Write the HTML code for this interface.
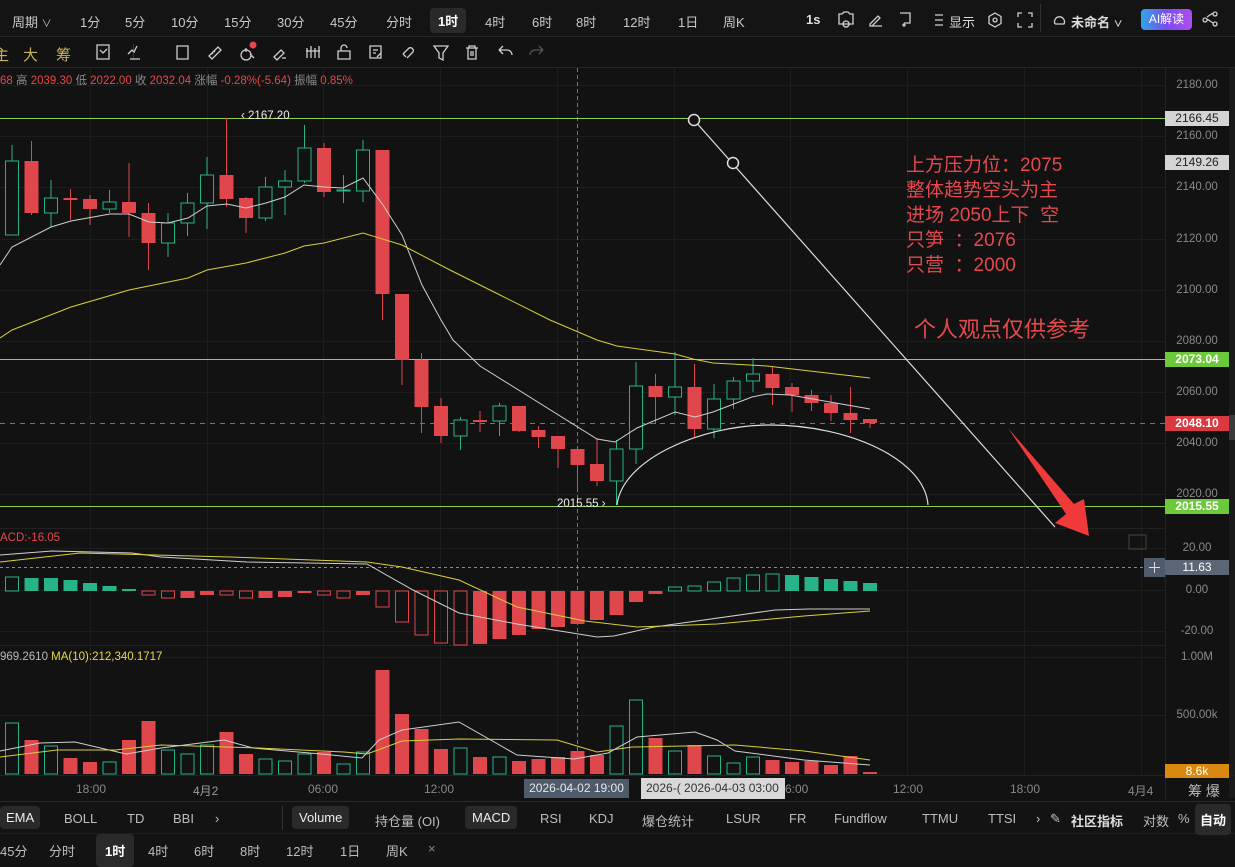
<!DOCTYPE html>
<html><head><meta charset="utf-8">
<style>
*{margin:0;padding:0;box-sizing:border-box}
body{width:1235px;height:865px;background:#121212;overflow:hidden;position:relative;font-family:"Liberation Sans","Noto Sans CJK SC",sans-serif;color:#c8c8c8}
.a{position:absolute;white-space:nowrap}
.t{font-size:13px;color:#c9c9c9;top:12px}
.hl{background:#2a2a2a;border-radius:4px}
.ax{position:absolute;left:1165px;width:64px;font-size:11.5px;color:#8a8a8a;text-align:center;line-height:13px}
.bx{position:absolute;left:1165px;width:64px;height:15px;font-size:12px;line-height:15px;text-align:center;font-weight:bold;color:#fff}
.b1{top:811px;font-size:13px;color:#bdbdbd}
.b2{top:841px;font-size:13px;color:#bdbdbd}
.r{color:#e5484d;font-size:19px}
</style></head><body>
<svg id="s" width="1235" height="865" style="position:absolute;left:0;top:0"></svg>

<!-- top bar -->
<div class="a t" style="left:12px">周期 <span style="font-size:10px">∨</span></div>
<div class="a t" style="left:80px">1分</div>
<div class="a t" style="left:125px">5分</div>
<div class="a t" style="left:171px">10分</div>
<div class="a t" style="left:224px">15分</div>
<div class="a t" style="left:277px">30分</div>
<div class="a t" style="left:330px">45分</div>
<div class="a t" style="left:386px">分时</div>
<div class="a t hl" style="left:430px;top:8px;padding:3px 8px;color:#fff;font-weight:bold">1时</div>
<div class="a t" style="left:485px">4时</div>
<div class="a t" style="left:532px">6时</div>
<div class="a t" style="left:576px">8时</div>
<div class="a t" style="left:623px">12时</div>
<div class="a t" style="left:678px">1日</div>
<div class="a t" style="left:723px">周K</div>
<div class="a t" style="left:806px;color:#ddd;font-weight:bold">1s</div>
<div class="a t" style="left:949px;color:#ddd">显示</div>
<div class="a t" style="left:1071px;color:#ddd;font-weight:bold">未命名 <span style="font-size:9px">∨</span></div>
<div class="a" style="left:1141px;top:9px;width:51px;height:21px;border-radius:4px;background:linear-gradient(90deg,#2fa6e8,#7a4cf0,#b04cf0);color:#fff;font-size:12px;line-height:21px;text-align:center">AI解读</div>

<!-- second toolbar -->
<div class="a" style="left:-6px;top:44px;font-size:15px;color:#c8b45a">主</div>
<div class="a" style="left:23px;top:44px;font-size:15px;color:#c8b45a">大</div>
<div class="a" style="left:56px;top:44px;font-size:15px;color:#c8b45a">筹</div>

<!-- info line -->
<div class="a" style="left:0;top:72px;font-size:11.5px;color:#8a8a8a"><span style="color:#e5484d">68</span> 高 <span style="color:#e5484d">2039.30</span> 低 <span style="color:#e5484d">2022.00</span> 收 <span style="color:#e5484d">2032.04</span> 涨幅 <span style="color:#e5484d">-0.28%(-5.64)</span> 振幅 <span style="color:#e5484d">0.85%</span></div>

<!-- price axis -->
<div class="ax" style="top:79px">2180.00</div>
<div class="ax" style="top:130px">2160.00</div>
<div class="ax" style="top:181px">2140.00</div>
<div class="ax" style="top:233px">2120.00</div>
<div class="ax" style="top:284px">2100.00</div>
<div class="ax" style="top:335px">2080.00</div>
<div class="ax" style="top:386px">2060.00</div>
<div class="ax" style="top:437px">2040.00</div>
<div class="ax" style="top:488px">2020.00</div>
<div class="bx" style="top:111px;background:#d4d4d4;color:#222;font-weight:normal">2166.45</div>
<div class="bx" style="top:155px;background:#d4d4d4;color:#222;font-weight:normal">2149.26</div>
<div class="bx" style="top:352px;background:#6cc93a">2073.04</div>
<div class="bx" style="top:416px;background:#d9393f">2048.10</div>
<div class="bx" style="top:499px;background:#6cc93a">2015.55</div>
<div class="ax" style="top:542px">20.00</div>
<div class="bx" style="top:560px;background:#5b6677;font-weight:normal">11.63</div>
<div class="ax" style="top:584px">0.00</div>
<div class="ax" style="top:625px">-20.00</div>
<div class="ax" style="top:651px">1.00M</div>
<div class="ax" style="top:709px">500.00k</div>
<div class="bx" style="top:764px;background:#d9890f;height:14px;line-height:14px;font-weight:normal">8.6k</div>
<div class="a" style="left:1229px;top:415px;width:6px;height:25px;background:#3a3a3a"></div>

<!-- annotations -->
<div class="a r" style="left:906px;top:150px">上方压力位：2075</div>
<div class="a r" style="left:906px;top:175px">整体趋势空头为主</div>
<div class="a r" style="left:906px;top:200px">进场 2050上下&nbsp;&nbsp;空</div>
<div class="a r" style="left:906px;top:225px">只笋&nbsp;&nbsp;：2076</div>
<div class="a r" style="left:906px;top:250px">只营&nbsp;&nbsp;：2000</div>
<div class="a r" style="left:914px;top:312px;font-size:22px">个人观点仅供参考</div>

<div class="a" style="left:241px;top:110px;font-size:11.5px;color:#eee">‹ 2167.20</div>
<div class="a" style="left:557px;top:498px;font-size:11.5px;color:#eee">2015.55 ›</div>

<div class="a" style="left:0;top:532px;font-size:11.5px;color:#e5484d">ACD:-16.05</div>
<div class="a" style="left:0;top:651px;font-size:11.5px;color:#bbb">969.2610 <span style="color:#e8d84a">MA(10):212,340.1717</span></div>

<!-- time axis -->
<div class="a" style="left:76px;top:782px;font-size:12px;color:#888">18:00</div>
<div class="a" style="left:193px;top:782px;font-size:12px;color:#999">4月2</div>
<div class="a" style="left:308px;top:782px;font-size:12px;color:#888">06:00</div>
<div class="a" style="left:424px;top:782px;font-size:12px;color:#888">12:00</div>
<div class="a" style="left:524px;top:779px;width:105px;height:19px;background:#4f5a6b;font-size:12px;color:#e6e6e6;line-height:19px;text-align:center">2026-04-02 19:00</div>
<div class="a" style="left:785px;top:782px;font-size:12px;color:#888">6:00</div>
<div class="a" style="left:641px;top:778px;width:144px;height:21px;background:#d8d8d8;font-size:12px;color:#333;line-height:21px;padding-left:5px">2026-( 2026-04-03 03:00</div>
<div class="a" style="left:893px;top:782px;font-size:12px;color:#888">12:00</div>
<div class="a" style="left:1010px;top:782px;font-size:12px;color:#888">18:00</div>
<div class="a" style="left:1128px;top:782px;font-size:12px;color:#888">4月4</div>
<div class="a" style="left:1188px;top:781px;font-size:14px;color:#bbb">筹 爆</div>

<!-- bottom bar 1 -->
<div class="a b1 hl" style="left:0;top:806px;padding:4px 6px;color:#eee">EMA</div>
<div class="a b1" style="left:64px">BOLL</div>
<div class="a b1" style="left:127px">TD</div>
<div class="a b1" style="left:173px">BBI</div>
<div class="a b1" style="left:215px">›</div>
<div class="a b1 hl" style="left:292px;top:806px;padding:4px 7px;color:#eee">Volume</div>
<div class="a b1" style="left:375px">持仓量 (OI)</div>
<div class="a b1 hl" style="left:465px;top:806px;padding:4px 7px;color:#eee">MACD</div>
<div class="a b1" style="left:540px">RSI</div>
<div class="a b1" style="left:589px">KDJ</div>
<div class="a b1" style="left:642px">爆仓统计</div>
<div class="a b1" style="left:726px">LSUR</div>
<div class="a b1" style="left:789px">FR</div>
<div class="a b1" style="left:834px">Fundflow</div>
<div class="a b1" style="left:922px">TTMU</div>
<div class="a b1" style="left:988px">TTSI</div>
<div class="a b1" style="left:1036px">›</div>
<div class="a b1" style="left:1050px">✎</div>
<div class="a b1" style="left:1071px;color:#ddd;font-weight:bold">社区指标</div>
<div class="a b1" style="left:1143px">对数</div>
<div class="a b1" style="left:1178px">%</div>
<div class="a b1 hl" style="left:1195px;top:804px;padding:6px 5px;color:#fff;font-weight:bold">自动</div>

<!-- bottom bar 2 -->
<div class="a b2" style="left:0">45分</div>
<div class="a b2" style="left:49px">分时</div>
<div class="a b2 hl" style="left:96px;top:834px;padding:7px 9px;color:#fff;font-weight:bold">1时</div>
<div class="a b2" style="left:148px">4时</div>
<div class="a b2" style="left:194px">6时</div>
<div class="a b2" style="left:240px">8时</div>
<div class="a b2" style="left:286px">12时</div>
<div class="a b2" style="left:340px">1日</div>
<div class="a b2" style="left:386px">周K</div>
<div class="a b2" style="left:428px;color:#888">×</div>

<script>
var s=document.getElementById('s'),h='';
function L(x1,y1,x2,y2,c,w,d){h+='<line x1="'+x1+'" y1="'+y1+'" x2="'+x2+'" y2="'+y2+'" stroke="'+c+'" stroke-width="'+(w||1)+'"'+(d?' stroke-dasharray="'+d+'"':'')+'/>';}
function R(x,y,w,hh,f,st){h+='<rect x="'+x+'" y="'+y+'" width="'+w+'" height="'+Math.max(hh,1)+'" fill="'+f+'"'+(st?' stroke="'+st+'"':'')+'/>';}
function P(pts,c,w){h+='<polyline fill="none" stroke="'+c+'" stroke-width="'+(w||1)+'" points="'+pts+'"/>';}
var G='#27b38a',RD='#e0474c';
// bars backgrounds
R(0,0,1235,36,'#141414');L(0,36.5,1235,36.5,'#262626');
R(0,37,1235,30,'#121212');L(0,67.5,1235,67.5,'#262626');
L(1040.5,4,1040.5,32,'#333');L(133.5,44,133.5,60,'#333');
R(0,800,1235,65,'#131313');L(0,801.5,1235,801.5,'#2a2a2a');L(0,833.5,1235,833.5,'#1f1f1f');L(282.5,806,282.5,830,'#333');
R(1229,68,6,730,'#1a1a1a');
// grid
[90,207,323,440,557,674,790,907,1024,1141].forEach(function(x){L(x+.5,68,x+.5,775,'#1d1d1d');});
[85,136,187,239,290,341,392,443,494,548,590,631,657,715].forEach(function(y){L(0,y+.5,1165,y+.5,'#1d1d1d');});
L(1165.5,68,1165.5,800,'#222');
L(0,528.5,1165,528.5,'#222');L(0,645.5,1165,645.5,'#222');L(0,775.5,1235,775.5,'#222');
// crosshair
L(577.5,68,577.5,775,'#777',1,'4,3');L(0,567.5,1150,567.5,'#888',1,'3,3');
h+='<rect x="1144" y="558" width="21" height="19" fill="#4f5a6b"/>';L(1149,567.5,1160,567.5,'#ddd');L(1154.5,562,1154.5,573,'#ddd');
h+='<rect x="1129" y="535" width="17" height="14" fill="none" stroke="#444"/>';
// horizontal lines
L(0,118.5,1165,118.5,'#8fd14f');L(0,359.5,1165,359.5,'#8fd14f');L(0,506.5,1165,506.5,'#8fd14f');
L(0,423.5,1165,423.5,'#e0474c',1,'5,5');
// candles
var C=[[1,161,235,145,235],[0,161,213,141,215],[1,198,213,180,227],[0,198,200,189,220],[0,199,209,195,225],[1,202,209,190,213],[0,202,213,163,237],[0,213,243,203,270],[1,223,243,213,257],[1,203,223,193,236],[1,175,203,157,229],[0,175,199,118,207],[0,198,218,197,233],[1,187,218,177,221],[1,181,187,170,215],[1,148,181,125,183],[0,148,192,143,197],[1,190,191,175,203],[1,150,191,140,202],[0,150,294,150,320],[0,294,360,294,385],[0,360,407,353,433],[0,406,436,398,443],[1,420,436,417,450],[0,420,422,411,432],[1,406,421,403,436],[0,406,431,406,432],[0,430,437,426,448],[0,436,449,436,468],[0,449,465,449,489],[0,464,481,438,486],[1,449,481,440,505],[1,386,449,362,464],[0,386,397,374,424],[1,387,397,352,415],[0,387,429,364,437],[1,399,429,384,438],[1,381,399,377,409],[1,374,381,358,392],[0,374,388,367,405],[0,387,395,383,412],[0,395,403,390,411],[0,403,413,395,421],[0,413,420,387,433],[0,419,423,419,428]];
C.forEach(function(c,i){var x=12+19.5*i;var col=c[0]?G:RD;L(x,c[3],x,c[1],col);L(x,c[2],x,c[4],col);
 if(c[0])h+='<rect x="'+(x-6.5)+'" y="'+c[1]+'" width="13" height="'+Math.max(c[2]-c[1],1)+'" fill="#121212" stroke="'+G+'"/>';else R(x-7,c[1],14,c[2]-c[1],RD);});
// MAs
P('0,265 12,247 51,227 71,221 110,214 129,214 149,222 168,223 188,218 207,206 227,204 246,208 266,203 285,197 304,185 324,187 343,188 363,178 383,205 402,235 422,285 441,320 453,340 480,366 597,439 615,442 637,428 675,412 695,417 713,412 752,397 767,394 790,395 870,409','#cfcfcf');
P('0,338 12,330 71,307 129,290 188,278 207,270 246,263 285,253 304,246 324,243 363,233 402,245 450,270 500,295 550,320 597,340 617,346 675,354 693,359 713,363 767,366 870,378','#d8cf3a');
// arc
h+='<path d="M617,505 C622,460 700,425 770,425 C850,425 925,460 928,505" fill="none" stroke="#ddd" stroke-width="1.2"/>';
// trend line
L(694,120,1055,527,'#ddd',1.2);
h+='<circle cx="694" cy="120" r="5.5" fill="#121212" stroke="#ddd" stroke-width="1.5"/><circle cx="733" cy="163" r="5.5" fill="#121212" stroke="#ddd" stroke-width="1.5"/>';
// arrow
h+='<polygon points="1008,428 1074,504 1084,499 1089,536 1055,523 1066,514" fill="#f03a3a"/>';
// MACD hist
var M=[[1,577,1],[1,578,0],[1,578,0],[1,580,0],[1,583,0],[1,586,0],[1,589,0],[0,595,1],[0,598,1],[0,598,0],[0,595,0],[0,595,1],[0,598,1],[0,598,0],[0,597,0],[0,593,0],[0,595,1],[0,598,1],[0,595,0],[0,607,1],[0,622,1],[0,635,1],[0,643,1],[0,645,1],[0,644,0],[0,639,0],[0,635,0],[0,629,0],[0,627,0],[0,624,0],[0,620,0],[0,615,0],[0,602,0],[0,594,0],[1,587,1],[1,586,1],[1,582,1],[1,578,1],[1,575,1],[1,574,1],[1,575,0],[1,577,0],[1,579,0],[1,581,0],[1,583,0]];
var Z=591;
M.forEach(function(m,i){var x=12+19.5*i,col=m[0]?G:RD,y1=Math.min(m[1],Z),hh=Math.abs(m[1]-Z);
 if(m[2])h+='<rect x="'+(x-6.5)+'" y="'+y1+'" width="13" height="'+Math.max(hh,1)+'" fill="none" stroke="'+col+'"/>';else R(x-7,y1,14,hh,col);});
P('0,555 52,551 132,553 161,557 247,562 367,564 413,590 459,613 517,624 597,637 614,636 654,627 775,610 809,609 870,609','#cfcfcf');
P('0,562 80,553 230,557 367,562 402,567 459,580 517,607 585,621 637,627 717,624 804,616 870,611','#d8cf3a');
// volume
var V=[[1,723],[0,740],[1,746],[0,758],[0,762],[1,762],[0,740],[0,721],[1,750],[1,754],[1,745],[0,732],[0,754],[1,759],[1,761],[1,754],[0,752],[1,764],[1,752],[0,670],[0,714],[0,729],[0,749],[1,748],[0,757],[1,757],[0,761],[0,759],[0,757],[0,751],[0,755],[1,726],[1,700],[0,738],[1,751],[0,745],[1,756],[1,763],[1,757],[0,760],[0,762],[0,761],[0,765],[0,756],[0,772]];
var B=774;
V.forEach(function(v,i){var x=12+19.5*i;if(v[0])h+='<rect x="'+(x-6.5)+'" y="'+v[1]+'" width="13" height="'+(B-v[1])+'" fill="none" stroke="'+G+'"/>';else R(x-7,v[1],14,B-v[1],RD);});
P('0,751 40,743 75,742 126,754 161,748 224,740 253,748 321,754 362,758 379,740 402,730 459,722 517,755 574,759 608,753 637,737 695,732 717,740 735,751 804,760 870,765','#cfcfcf');
P('0,757 57,750 115,750 161,745 258,748 344,752 367,754 402,741 459,739 557,740 597,752 632,747 735,745 804,751 870,760','#d8cf3a');
// toolbar icons (simple)
var ic='#cfcfcf';
function I(d,x,y){h+='<path transform="translate('+x+','+y+')" d="'+d+'" fill="none" stroke="'+ic+'" stroke-width="1.3"/>';}
I('M2,1h12v14h-12zM5,6l3,3l4,-4',95,44);
I('M1,9l4,-4l2,2l3,-6M3,14h10',127,45);
I('M1,3h3l2,-2h4l2,2h3v10h-14zM8,10a3,3 0 1 0 0.1,0',838,11);
I('M2,13l8,-8l2,2l-8,8h-2zM2,15h12',868,11);
I('M3,2h10v10h-6M7,12v4M5,14h4',897,11);
I('M1,3h8M1,8h8M1,13h8',934,12);
I('M8,1l6,3.5v7l-6,3.5l-6,-3.5v-7zM8,6a2,2 0 1 0 0.1,0',987,12);
I('M1,5v-4h4M11,1h4v4M15,11v4h-4M5,15h-4v-4',1017,12);
I('M3,12a5,5 0 1 1 9,0h-9',1052,12);
I('M2,8a2,2 0 1 0 0.1,0M12,2a2,2 0 1 0 0.1,0M12,12a2,2 0 1 0 0.1,0M4,7l6,-4M4,9l6,4',1203,10);
I('M1,1h11v13h-11zM4,1v-0',176,45);
I('M3,12l9,-9l3,3l-9,9zM6,9l1,1M8,7l1,1',206,44);
I('M6,6a5,5 0 1 0 0.1,0M10,10l4,4M4,6h4M6,4v4',240,44);h+='<circle cx="253" cy="45" r="3.5" fill="#e5484d"/>';
I('M2,13l7,-7l3,3l-7,7zM10,14h4',272,44);
I('M2,4v10M6,2v12M10,4v10M14,2v12M1,7h14',305,44);
I('M2,8h12v8h-12zM5,8v-3a3,3 0 0 1 6,0',336,43);
I('M2,2h11v12h-11zM5,6h5M5,9h3M9,13l4,-4',368,44);
I('M3,10l6,-6a3,3 0 0 1 4,4l-6,6M6,13l-3,-3',400,44);
I('M1,2h14l-5,7v7l-4,-2v-5z',433,44);
I('M2,4h12M5,4v-2h6v2M4,4v11h8v-11M7,7v5M9,7v5',464,44);
I('M2,6l4,-4M2,6l4,4M2,6h8a5,5 0 0 1 5,5',497,44);
h+='<path transform="translate(528,44)" d="M15,6l-4,-4M15,6l-4,4M15,6h-8a5,5 0 0 0 -5,5" fill="none" stroke="#555" stroke-width="1.3"/>';
s.innerHTML=h;
</script>
</body></html>
